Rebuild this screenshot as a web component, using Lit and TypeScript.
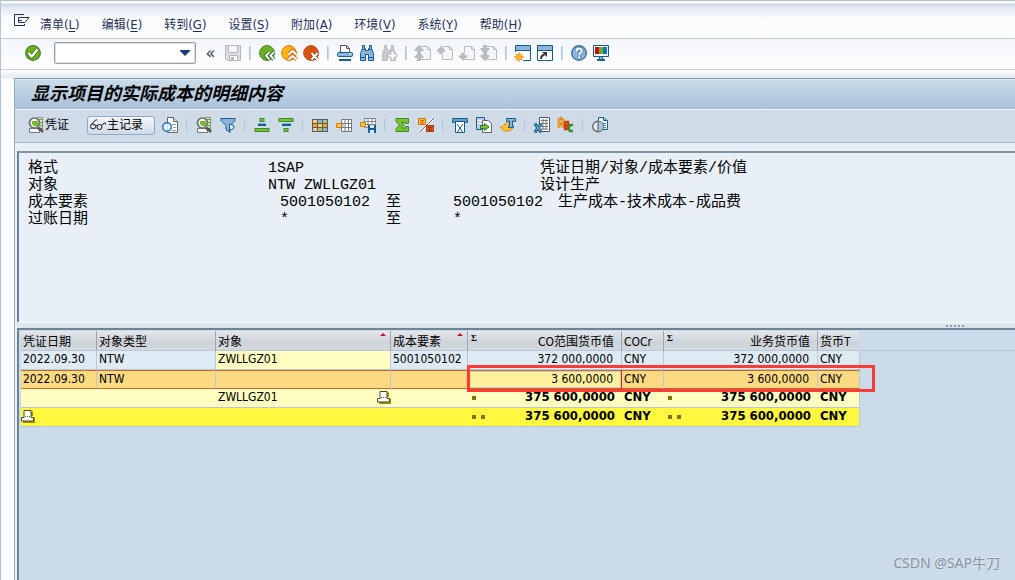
import { LitElement, html, svg, css, nothing } from "lit";
import { customElement, property } from "lit/decorators.js";
import { classMap } from "lit/directives/class-map.js";

const pageArrow = (body: unknown) => svg`
  <path d="M5.500 1.500h7l3 3v10h-10z" fill="#f4f6f9" stroke="#b9bcc0"/><path d="M12.500 1.500v3h3" fill="none" stroke="#b9bcc0"/>${body}`;
const up = svg`<path d="M-.5 5.500L4 .5l4.500 5V7H6v2.500H2V7H-.5z" fill="#b9bcc0" stroke="#fafbfd" stroke-width=".5"/>`;
const down = svg`<path d="M2 7.500h4V10h2.500v1.500L4 16l-4.500-4.500V10H2z" fill="#b9bcc0" stroke="#fafbfd" stroke-width=".5"/>`;
const lens = svg`
  <path d="M1.500 11.500h10v4h-10z" fill="#fff" stroke="#777"/>
  <path d="M9.500.5h5v12h-5z" fill="#fff" stroke="#777" stroke-width=".8"/>
  <path d="M11 2.500h4M11 5.500h4M12 8.500h3M12 11.500h3" stroke="#63a82c" stroke-width="1.600"/>
  <circle cx="6.500" cy="6" r="5" fill="#f3f8f0" stroke="#6d6d6d" stroke-width="1.700"/>
  <path d="M4 4h6v5H5.500V7.500H4z" fill="#78b82a"/><path d="M10.500 10.500l4.500 4.500" stroke="#555" stroke-width="2.600"/>`;
const gridLines = svg`<path d="M5.500 2.500h10v12h-10zM5.500 6.500h10M5.500 10.500h10M9 2.500v12M12.500 2.500v12" fill="#fff" stroke="#777"/>`;

const glyphs: Record<string, unknown> = {
  check: svg`<circle cx="8" cy="8" r="7.300" fill="#6cb11c" stroke="#4d7d3a" stroke-width="1.300"/><path d="M3.500 8l3.200 3.500L12.500 4.500" fill="none" stroke="#3d7a26" stroke-width="4"/><path d="M3.500 8l3.200 3.500L12.500 4.500" fill="none" stroke="#fff" stroke-width="2.400"/>`,
  save: svg`<path d="M.5.5h15v15H2.500l-2-2z" fill="#dcdde0" stroke="#b4b6ba"/><path d="M3.500.5h9v7h-9z" fill="#f6f7f9" stroke="#b4b6ba"/><path d="M4.500 10.500h8v5h-8z" fill="#fff" stroke="#b4b6ba"/><path d="M6 12h3v3H6z" fill="#b4b6ba"/>`,
  back: svg`<circle cx="8" cy="8" r="7.400" fill="#6cb11c" stroke="#3f7c3a"/><path d="M10.500 7l-3.500 3.700 3.500 3.700M15 7l-3.500 3.700L15 14.400" fill="none" stroke="#3f7c3a" stroke-width="4"/><path d="M10.500 7l-3.500 3.700 3.500 3.700M15 7l-3.500 3.700L15 14.400" fill="none" stroke="#fff" stroke-width="1.800"/>`,
  exit: svg`<circle cx="8" cy="8" r="7.400" fill="#fbb315" stroke="#e07b1a"/><path d="M7.500 9.500L11.500 6l4 3.500M7.500 14.500l4-3.500 4 3.500" fill="none" stroke="#d96f1a" stroke-width="4"/><path d="M7.500 9.500L11.500 6l4 3.500M7.500 14.500l4-3.500 4 3.500" fill="none" stroke="#fff" stroke-width="1.800"/>`,
  cancel: svg`<circle cx="8" cy="8" r="7.400" fill="#d9500f" stroke="#b8562c"/><path d="M8.500 8l6 6.500M14.500 8l-6 6.500" stroke="#a13c10" stroke-width="4"/><path d="M8.500 8l6 6.500M14.500 8l-6 6.500" stroke="#fff" stroke-width="2"/>`,
  print: svg`<path d="M3.500 7V.5h6l3 3V7" fill="#fff" stroke="#5c5c5c"/><path d="M9.500.5v3h3" fill="none" stroke="#5c5c5c"/><rect x=".5" y="7.500" width="15" height="4" rx="1" fill="#8db3da" stroke="#135f8f"/><path d="M2 14h12v2H2z" fill="#135f8f"/><path d="M12 9h2" stroke="#fff"/>`,
  find: svg`<path d="M3.500.5h2v3h1v2h3v-2h1v-3h2v3l2 5v7h-5v-6h-3v6h-5v-7l2-5z" fill="#8db3da" stroke="#135f8f"/><path d="M1 12.500h5M10 12.500h5M3 4.500h3M10 4.500h3" stroke="#135f8f"/>`,
  next: svg`<path d="M3.500.5h2v3h1v2h3v-2h1v-3h2v3l2 5v7h-5v-6h-3v6h-5v-7l2-5z" fill="#c9cbce" stroke="#b9bcc0"/><path d="M10 6h3v3h3v3h-3v3h-3v-3H7V9h3z" fill="#fff" stroke="#b9bcc0"/>`,
  first: pageArrow(svg`<path d="M-.5 4.500L4 0l4.500 4.500V6H6v2H2V6H-.5zM-.5 11.500L4 7l4.500 4.500V13H6v3H2v-3H-.5z" fill="#b9bcc0"/>`),
  prev: pageArrow(up),
  following: pageArrow(down),
  last: pageArrow(svg`<path d="M2 0h4v3h2.500v1.500L4 9-.5 4.500V3H2zM2 8h4v2h2.500v1.500L4 16l-4.500-4.500V10H2z" fill="#b9bcc0"/>`),
  session: svg`<path d="M.5.5h15v15H.5z" fill="#fff" stroke="#135f8f"/><path d="M1 1h14v4H1z" fill="#8db3da"/><path d="M1 5.500h14" stroke="#135f8f"/><path d="M0 7h8v9H0z" fill="#fff"/><path d="M4 7.500v9M-.5 12h9M1 9l6 6M7 9l-6 6" stroke="#e0791b" stroke-width="1.300"/><circle cx="4" cy="12" r="2.700" fill="#fdb813"/>`,
  shortcut: svg`<path d="M.5.5h15v15H.5z" fill="#fff" stroke="#135f8f"/><path d="M1 1h14v4H1z" fill="#8db3da"/><path d="M1 5.500h14" stroke="#135f8f"/><path d="M4 14c0-3 1-4 3.500-4" fill="none" stroke="#333" stroke-width="2"/><path d="M5 7h5v5z" fill="#333"/>`,
  help: svg`<circle cx="8" cy="8" r="7.300" fill="#8db3da" stroke="#2d6c98" stroke-width="1.300"/><path d="M5.300 6.500c0-4 5.500-3.600 5.500-.6 0 2-2.600 2-2.600 4M8.200 11.300v2" fill="none" stroke="#2d6c98" stroke-width="3.400"/><path d="M5.300 6.500c0-4 5.500-3.600 5.500-.6 0 2-2.600 2-2.600 4M8.200 11.300v2" fill="none" stroke="#fff" stroke-width="2"/>`,
  layout: svg`<path d="M.5.500h15v11H.5z" fill="#fff" stroke="#135f8f"/><path d="M2 2h4v7H2z" fill="#d00a0a"/><path d="M6 2h4v7H6z" fill="#6cb11c"/><path d="M10 2h4v7h-4z" fill="#0a78c8"/><path d="M6 12h4v2h2v2H4v-2h2z" fill="#135f8f"/><path d="M7 12h2v2H7z" fill="#8db3da"/>`,
  glasses: svg`<g fill="none" stroke="#111"><circle cx="3" cy="9.500" r="2.500"/><circle cx="9.500" cy="10" r="2.500"/><path d="M5.500 9q1-1 1.700 0M1 8L5.500 3q1-1 1.500.5M11.500 8.500L14.500 6q1.500-.5 1 1.500"/></g>`,
  lens,
  docs: svg`<path d="M5.500.500h6l4 4v11h-10z" fill="#fff" stroke="#666"/><path d="M11.500.500v4h4" fill="#ddd" stroke="#666"/><path d="M10 7.500h4M11 10.500h3M10 13.500h4" stroke="#999"/><circle cx="5" cy="10" r="4.300" fill="#eaf4fb" fill-opacity=".9" stroke="#1c74a8" stroke-width="1.400"/>`,
  filter: svg`<path d="M1 1.500h14v2l-5 5v7l-4-3v-4l-5-5z" fill="#8db3da" stroke="#135f8f"/><path d="M9.500 15V7.500h2a2 2 0 0 1 0 5H10" fill="#d9e8f3" stroke="#135f8f"/>`,
  asc: svg`<rect x="6" y="1.500" width="4" height="3" fill="#7cc02c" stroke="#3f8a2e"/><path d="M4 8h8" stroke="#135f8f" stroke-width="2"/><path d="M4 6.500h8" stroke="#8db3da"/><rect x="1" y="11.500" width="14" height="3" fill="#7cc02c" stroke="#3f8a2e"/>`,
  desc: svg`<rect x="1" y="1.500" width="14" height="3" fill="#7cc02c" stroke="#3f8a2e"/><path d="M4 8h9" stroke="#135f8f" stroke-width="2"/><path d="M4 6.500h9" stroke="#8db3da"/><rect x="6" y="11.500" width="4" height="3" fill="#7cc02c" stroke="#3f8a2e"/>`,
  table: svg`<path d="M0 2h16v13H0z" fill="#5b5b5b"/><path d="M1 3h4v3H1zM6 7h4v3H6z" fill="#ffd351"/><path d="M6 3h4v3H6zM11 11h4v3h-4z" fill="#8db3da"/><path d="M11 3h4v3h-4zM6 11h4v3H6z" fill="#a4cc6b"/><path d="M1 7h4v3H1zM11 7h4v3h-4z" fill="#f2a23c"/><path d="M1 11h4v3H1z" fill="#f7c4c4"/>`,
  choose: svg`${gridLines}<path d="M6 7h3v3H6z" fill="#b7cee6"/><path d="M.5 6.500h5v4h-5z" fill="#ffd028" stroke="#e2761b"/>`,
  saveGrid: svg`<path d="M4.500 1.500h11v9h-11zM4.500 4.500h11M4.500 7.500h11M8 1.500v9M12 1.500v9" fill="#fff" stroke="#888"/><path d="M.5 5.500h5v4h-5z" fill="#ffd028" stroke="#e2761b"/><path d="M8 8h8v8H9l-1-1z" fill="#135f8f"/><path d="M10 8h4v3h-4zM10 13h4v3h-4z" fill="#d9e8f3"/>`,
  sigma: svg`<path d="M2 1.500h12.500v5h-3v-1H7.500L10.500 8l-3 3h4v-1.500h3v5H2v-3L5.500 8 2 4.500z" fill="#7cc02c" stroke="#3f8a2e"/>`,
  subtotal: svg`<path d="M16 1L1 15.500" stroke="#fff" stroke-width="3"/><path d="M16 1L1 15.500" stroke="#555"/><path d="M.5 1.500h7v6h-7z" fill="#ffc32a" stroke="#df6a18"/><path d="M2.500 3.500h3l-1.500 1 1.500 1.500h-3" fill="none" stroke="#d8500f"/><path d="M8.500 8.500h7v6h-7z" fill="#e0571b" stroke="#a53a10"/><path d="M13.500 10.500h-3l1.500 1-1.500 1.500h3" fill="none" stroke="#7d2808"/>`,
  preview: svg`<path d="M.5 1.500h15v4H.5z" fill="#6d9bc4" stroke="#135f8f"/><path d="M3.500 4.500h9v11h-9z" fill="#fff" stroke="#135f8f"/><path d="M5 7l3 4 3-4M8 10v1l-2.500 4M8 11l2.500 4" fill="none" stroke="#135f8f"/>`,
  exportFile: svg`<path d="M.5.500h8v12h-8z" fill="#b9d0e8" stroke="#135f8f"/><path d="M2 3.500h5M2 6.500h4" stroke="#fff"/><path d="M6.500 3.500h6l3 3v9h-9z" fill="#fff" stroke="#666"/><path d="M4.500 8.500h4v-2l4.500 3.500-4.500 3.500v-2h-4z" fill="#7cc02c" stroke="#2f7a2b"/>`,
  word: svg`<path d="M0 10q3 1 5-3 2-2 5-1v5h3q-2 4-5 2.500-3 2.500-8-3.500z" fill="#ffc32a" stroke="#e2861b"/><path d="M6.500 1.500h9v3h-1.500v-.5h-1.500v5h1v1.500h-5V9h1V4H8v.500H6.500z" fill="#8db3da" stroke="#135f8f"/>`,
  excel: svg`<path d="M5.500.500h10v14h-10z" fill="#fff" stroke="#555"/><path d="M7 3.500h7M7 6.500h7M7 9.500h7M7 12h7M9 2v11M12 2v11" stroke="#777"/><path d="M1 7l6 8M7 7l-6 8" stroke="#135f8f" stroke-width="3"/><path d="M1 7l6 8M7 7l-6 8" stroke="#8db3da"/><path d="M0 7h3M5 7h3M0 15h3M5 15h3" stroke="#135f8f"/>`,
  abc: svg`<path d="M1 11V3l2-2 2 2v8M1 7h4" fill="none" stroke="#e0791b" stroke-width="2.600"/><path d="M1 11V3l2-2 2 2v8" fill="none" stroke="#ffc32a"/><path d="M7 4v8h3V9H7M7 5h3v3" fill="none" stroke="#c9400f" stroke-width="2.400"/><path d="M15 8h-3l-1 2v3l1 1h3" fill="none" stroke="#3f8a2e" stroke-width="2.400"/>`,
  info: svg`<path d="M6.500 .5h5l4 3v9h-9z" fill="#fff" stroke="#135f8f"/><path d="M11.500 .5v3h4" fill="#8db3da" stroke="#135f8f"/><path d="M11 6.500h3M11 8.500h3M11 10.500h3" stroke="#4d86b0"/><circle cx="6" cy="9.500" r="5.300" fill="#dfe9f3" stroke="#6b6b6b" stroke-width="1.400"/><path d="M6 4.500v10a5 5 0 0 0 0-10z" fill="#a9c4df"/><path d="M6 4v11" stroke="#555"/>`,
};

@customElement("sap-icon")
class SapIcon extends LitElement {
  @property() name = "";
  static styles = css`
    :host { display: block; width: 16px; height: 16px; flex: none; }
    svg { display: block; overflow: visible; }
  `;
  render() {
    return html`<svg width="16" height="16" viewBox="0 0 16 16" aria-hidden="true">${glyphs[this.name]}</svg>`;
  }
}

type Tool = [string, string] | null;

const menus: [string, string][] = [
  ["清单", "L"], ["编辑", "E"], ["转到", "G"], ["设置", "S"],
  ["附加", "A"], ["环境", "V"], ["系统", "Y"], ["帮助", "H"],
];
const systemTools: Tool[] = [
  ["save", "保存"], null, ["back", "返回"], ["exit", "退出"], ["cancel", "取消"], null,
  ["print", "打印"], ["find", "查找"], ["next", "查找下一个"], null,
  ["first", "第一页"], ["prev", "上一页"], ["following", "下一页"], ["last", "最后一页"], null,
  ["session", "新会话"], ["shortcut", "快捷方式"], null, ["help", "帮助"], ["layout", "定制布局"],
];
const listTools: Tool[] = [
  ["docs", "凭证环境"], null, ["lens", "明细"], ["filter", "过滤器"], null,
  ["asc", "升序"], ["desc", "降序"], null, ["table", "当前格式"], ["choose", "选择格式"], ["saveGrid", "保存格式"], null,
  ["sigma", "总计"], ["subtotal", "小计"], null, ["preview", "预览"], ["exportFile", "导出"], ["word", "文字处理"], null,
  ["excel", "电子表格"], ["abc", "ABC 分析"], null, ["info", "信息"],
];

interface Column { label: string; width: number; sum?: boolean; sorted?: boolean }
const columns: Column[] = [
  { label: "凭证日期", width: 76 },
  { label: "对象类型", width: 119 },
  { label: "对象", width: 175, sorted: true },
  { label: "成本要素", width: 77, sorted: true },
  { label: "CO范围货币值", width: 154, sum: true },
  { label: "COCr", width: 42 },
  { label: "业务货币值", width: 154, sum: true },
  { label: "货币T", width: 42 },
];

interface Row { kind: string; level: number; cells: string[]; printerAt?: number }
const rows: Row[] = [
  { kind: "item", level: 0, cells: ["2022.09.30", "NTW", "ZWLLGZ01", "5001050102", "372 000,0000", "CNY", "372 000,0000", "CNY"] },
  { kind: "selected", level: 0, cells: ["2022.09.30", "NTW", "", "", "3 600,0000", "CNY", "3 600,0000", "CNY"] },
  { kind: "subtotal", level: 1, cells: ["", "", "ZWLLGZ01", "", "375 600,0000", "CNY", "375 600,0000", "CNY"], printerAt: 2 },
  { kind: "total", level: 2, cells: ["", "", "", "", "375 600,0000", "CNY", "375 600,0000", "CNY"], printerAt: 0 },
];

@customElement("app-root")
class AppRoot extends LitElement {
  static styles = css`
    :host {
      display: flex; flex-direction: column; min-height: 100vh; box-sizing: border-box;
      border-left: 1px solid #b7c3d6; background: #fdfdff; color: #000;
      font: 12px/16px "DejaVu Sans Condensed", "Noto Sans CJK SC", sans-serif;
    }
    button { font: inherit; color: inherit; background: none; border: 0; padding: 0; margin: 0; display: block; }
    .menubar {
      display: flex; align-items: center; gap: 22px; height: 39px; box-sizing: border-box; padding: 10px 13px 0;
      border-top: 1px solid #b0bccd; border-bottom: 1px solid #c3cad8;
      background: linear-gradient(#fff 0 2px, #cbd7e7 3px, #e6ecf5 8px, #fbfcfe 18px, #fdfdff); color: #1d2f5c;
    }
    .menu-icon { margin: -8px -12px 0 0; width: 16px; height: 13px; }
    .key { font-size: 13px; }
    .key u { text-underline-offset: 2px; }
    .system {
      display: flex; align-items: center; gap: 6px; height: 31px; box-sizing: border-box; padding: 0 0 2px 24px;
      border-bottom: 1px solid #c6cedb; background: linear-gradient(#f2f5fa, #fdfdff 70%);
    }
    .command {
      display: flex; align-items: center; width: 142px; height: 22px; box-sizing: border-box; margin-left: 7px;
      border: 1px solid #9a9fa5; border-radius: 2px; background: #fff; box-shadow: inset 0 0 0 1px #dcdfe3;
    }
    .command input { flex: 1; min-width: 0; border: 0; outline: 0; background: none; font: inherit; padding: 0 4px; }
    .drop { width: 20px; padding-left: 5px; }
    .drop svg { display: block; }
    .collapse { width: 17px; font: 18px/16px "DejaVu Sans Condensed", sans-serif; color: #444; text-align: center; }
    .rule { width: 2px; height: 14px; margin: 0 2px; background: linear-gradient(90deg, #a5bfdc, #d5e2ef); flex: none; }
    .screen { flex: 1; display: flex; flex-direction: column; padding: 8px 0 0 13px; background: linear-gradient(#fff, #e3e8f2 8px, #fdfdff 8px); }
    .frame { flex: 1; display: flex; flex-direction: column; border-left: 1px solid #93a9c0; border-top: 1px solid #869cb8; background: #e8eff6; }
    h1 {
      margin: 0; padding: 0 0 4px 16px; height: 31px; box-sizing: border-box; border-top: 1px solid #dce8f1; border-bottom: 1px solid #eef4f9;
      font: italic bold 18px/24px "Noto Sans CJK SC", sans-serif; background: linear-gradient(#cbdbe8, #a9c1da);
    }
    .list-tools {
      display: flex; align-items: center; gap: 8px; height: 33px; box-sizing: border-box; padding: 0 0 2px 13px;
      border-bottom: 1px solid #a3b5ca; background: #cfdce7;
    }
    .list-tools .rule { margin: 0; }
    .labelled { display: flex; align-items: center; gap: 1px; height: 19px; line-height: 20px; }
    .raised {
      width: 68px; margin-left: 10px; padding: 0 2px; box-sizing: border-box; border: 1px solid #8fa9c9; border-radius: 3px;
      background: linear-gradient(#f4f7fb, #cfdae8);
    }
    .raised + button { margin-left: -1px; }
    .panels { flex: 1; display: flex; flex-direction: column; padding: 8px 0 0 2px; }
    .criteria {
      height: 171px; box-sizing: border-box; border: solid #6c8496; border-width: 2px 0 0 2px; padding: 7px 0 0 9px;
      display: grid; grid-template-columns: 240px 118px 67px 87px 1fr; grid-auto-rows: 17px; align-content: start;
      font: 15px/17px "Liberation Mono", "Noto Sans CJK SC", monospace; white-space: pre; border-top-color: #7f95a5;
    }
    .value { padding-left: 12px; }
    .note { padding-left: 18px; }
    .splitter { height: 6px; box-sizing: border-box; background: #dce6ec; border-top: 1px solid #f2f7fa; display: flex; justify-content: flex-end; padding: 2px 50px 0 0; }
    .grip { width: 19px; height: 2px; background: repeating-linear-gradient(90deg, #8f9dab 0 2px, transparent 2px 4px); }
    .list { flex: 1; position: relative; border: solid #6c8496; border-width: 2px 0 0 2px; padding: 1px 0 0 2px; background: #cbdbe9; }
    table { border-collapse: separate; border-spacing: 0; table-layout: fixed; width: 100%; }
    th, td { height: 19px; box-sizing: border-box; padding: 0 2px; border-bottom: 1px solid #b9c5d8; text-align: left; vertical-align: top; line-height: 16px; white-space: nowrap; overflow: hidden; }
    th { height: 20px; font-weight: normal; border-right: 1px solid #9ba5b3; background: linear-gradient(#e4e7eb, #cdd3da 60%, #d4d9df); }
    th .text { padding-top: 3px; }
    th.last { border-right-color: #d4d9df; }
    th.filler { background: none; border-right: 0; }
    .cell { display: flex; align-items: flex-start; }
    td .cell { height: 16px; }
    .text { flex: 1; }
    td.sum, th.sum { padding-right: 7px; }
    td.sum { padding-right: 8px; }
    td.sum.strong { padding-right: 7px; }
    .sum .text { text-align: right; }
    .sigma { font: bold 9px/14px "Liberation Serif", serif; padding-left: 1px; }
    .sorted-mark { width: 6px; height: 3px; margin: 2px 2px 0 0; background: #c8102e; clip-path: polygon(50% 0, 100% 100%, 0 100%); }
    .item td { background: #deebf5; border-right: 1px solid #b9c5d8; }
    .item td.highlight, .subtotal td { background: #fffdc0; }
    .selected td { background: #fcda82; border-right: 1px solid #b9c5d8; border-top: 1px solid #c86a28; border-bottom-color: #c86a28; }
    .selected td.focus { background: #fff09c; box-shadow: inset 0 0 0 1px #c4cbd0; border-right-color: #c8281e; }
    .total td { background: #fff83e; }
    .subtotal td.edge, .total td.edge { border-right: 1px solid #b9c5d8; }
    tr td.filler { background: none; border: 0; }
    .strong { font-weight: bold; font-size: 13px; }
    .dots { display: flex; gap: 5px; padding: 7px 0 0 2px; }
    .dot { width: 4px; height: 4px; background: #857400; }
    .printer { display: block; width: 14px; height: 14px; margin: 1px -2px 0; }
    .callout { position: absolute; left: 448px; top: 35px; width: 408px; height: 27px; box-sizing: border-box; border: 3px solid #ff3b36; pointer-events: none; }
    .watermark { position: absolute; right: 15px; bottom: 7px; font: 14px/20px "Noto Sans", "Noto Sans CJK SC", sans-serif; color: #87929c; text-shadow: -1px -1px 0 #e3ebf2; }
  `;

  private tools(items: Tool[]) {
    return items.map((tool) => tool
      ? html`<button title=${tool[1]} aria-label=${tool[1]}><sap-icon name=${tool[0]}></sap-icon></button>`
      : html`<span class="rule"></span>`);
  }

  private printer() {
    return html`<svg class="printer" viewBox="0 0 14 14" role="img" aria-label="汇总"><path d="M2 13h11.500V8.500M11 7V2.500" fill="none" stroke="#a59000" stroke-width="2"/><path d="M.5 8.500H3V1.500h7v7h2.500v3.500H.5z" fill="#fff" stroke="#4c4a20"/><path d="M4 7.500h1M6 7.500h1M8 7.500h1" stroke="#4c6a90"/></svg>`;
  }

  private cell(row: Row, text: string, i: number) {
    const sum = !!columns[i].sum;
    const classes = {
      sum,
      highlight: i === 2,
      focus: row.kind === "selected" && i === 4,
      edge: i === columns.length - 1,
      strong: row.level > 0 && i > 3,
    };
    return html`<td class=${classMap(classes)}><div class="cell">
      ${sum && row.level ? html`<span class="dots">${Array.from({ length: row.level }, () => html`<i class="dot"></i>`)}</span>` : nothing}
      ${row.printerAt === 0 && i === 0 ? this.printer() : nothing}
      <span class="text">${text}</span>
      ${row.printerAt === 2 && i === 2 ? this.printer() : nothing}
    </div></td>`;
  }

  render() {
    return html`
      <nav class="menubar">
        <svg class="menu-icon" viewBox="0 0 16 13" aria-hidden="true">
          <path d="M10 .5H.5v11h10V10" fill="none" stroke="#1d2f5c"/><path d="M4.500 3.500h10.500l-4 5H4.500z" fill="#fff" stroke="#1d2f5c"/><path d="M5 6.500h3" stroke="#1d2f5c"/>
        </svg>
        ${menus.map(([label, key]) => html`<button>${label}<span class="key">(<u>${key}</u>)</span></button>`)}
      </nav>
      <div class="system">
        <button title="回车" aria-label="回车"><sap-icon name="check"></sap-icon></button>
        <div class="command">
          <input type="text" aria-label="命令" />
          <button class="drop" aria-label="历史命令"><svg width="10" height="6" viewBox="0 0 10 6"><path d="M0 0h10v1L5 6 0 1z" fill="#1d3c72"/></svg></button>
        </div>
        <button class="collapse" aria-label="收起">«</button>
        ${this.tools(systemTools)}
      </div>
      <div class="screen">
        <main class="frame">
          <h1>显示项目的实际成本的明细内容</h1>
          <div class="list-tools">
            <button class="labelled"><sap-icon name="lens"></sap-icon>凭证</button>
            <button class="labelled raised"><sap-icon name="glasses"></sap-icon>主记录</button>
            ${this.tools(listTools)}
          </div>
          <div class="panels">
            <section class="criteria">
              <span>格式</span><span>1SAP</span><span></span><span></span><span>凭证日期/对象/成本要素/价值</span>
              <span>对象</span><span>NTW ZWLLGZ01</span><span></span><span></span><span>设计生产</span>
              <span>成本要素</span><span class="value">5001050102</span><span>至</span><span>5001050102</span><span class="note">生产成本-技术成本-成品费</span>
              <span>过账日期</span><span class="value">*</span><span>至</span><span>*</span><span></span>
            </section>
            <div class="splitter"><div class="grip"></div></div>
            <section class="list">
              <table>
                <colgroup>${columns.map((c) => html`<col style="width:${c.width}px" />`)}<col /></colgroup>
                <thead><tr>
                  ${columns.map((c, i) => html`<th class=${classMap({ sum: !!c.sum, last: i === columns.length - 1 })} scope="col"><div class="cell">
                    ${c.sum ? html`<span class="sigma">Σ</span>` : nothing}<span class="text">${c.label}</span>${c.sorted ? html`<i class="sorted-mark"></i>` : nothing}
                  </div></th>`)}
                  <th class="filler"></th>
                </tr></thead>
                <tbody>
                  ${rows.map((row) => html`<tr class=${row.kind}>${row.cells.map((t, i) => this.cell(row, t, i))}<td class="filler"></td></tr>`)}
                </tbody>
              </table>
              <div class="callout"></div>
              <div class="watermark">CSDN @SAP牛刀</div>
            </section>
          </div>
        </main>
      </div>
    `;
  }
}
